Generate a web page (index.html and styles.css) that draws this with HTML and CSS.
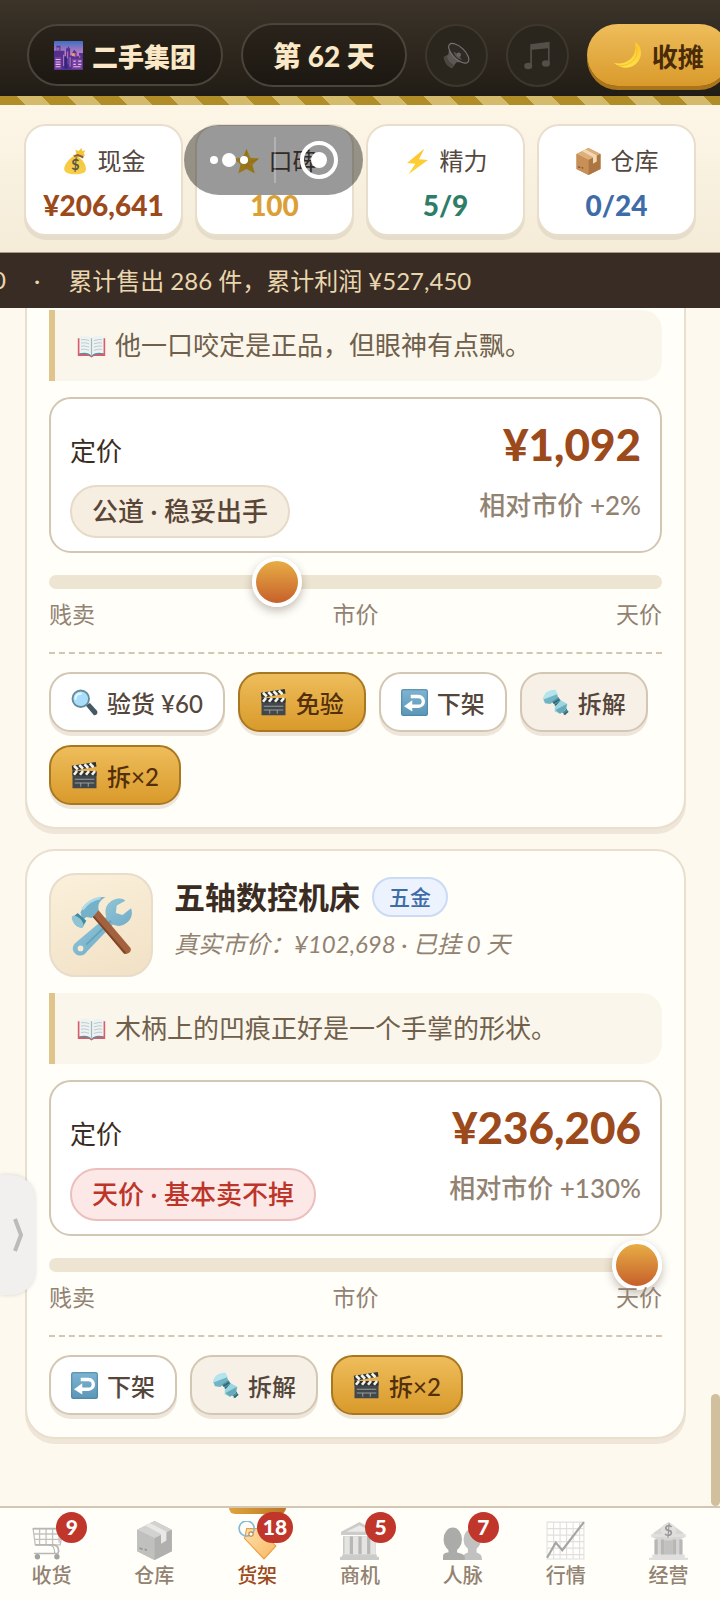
FILE: index.html
```html
<!DOCTYPE html>
<html lang="zh-CN">
<head>
    <meta charset="UTF-8">
    <meta name="viewport" content="width=device-width, initial-scale=1.0">
    <title>二手集团</title>
    <link rel="stylesheet" href="styles.css">
</head>
<body>
    <svg class="sprite" width="0" height="0" aria-hidden="true">
        <defs>
            <linearGradient id="g-sky" x1="0" y1="0" x2="0" y2="1"><stop offset="0" stop-color="#3f6fc4"/><stop offset=".45" stop-color="#c77bc0"/><stop offset="1" stop-color="#6a3fa8"/></linearGradient>
            <linearGradient id="g-moon" x1="0" y1="0" x2="0" y2="1"><stop offset="0" stop-color="#fdc62e"/><stop offset="1" stop-color="#ffe04a"/></linearGradient>
            <linearGradient id="g-bag" x1="0" y1="0" x2="0" y2="1"><stop offset="0" stop-color="#f5c540"/><stop offset="1" stop-color="#f8cf48"/></linearGradient>
            <linearGradient id="g-bolt" x1="0" y1="0" x2="0" y2="1"><stop offset="0" stop-color="#fec02e"/><stop offset="1" stop-color="#fdd83a"/></linearGradient>
            <linearGradient id="g-key" x1="0" y1="0" x2="0" y2="1"><stop offset="0" stop-color="#7fb4d2"/><stop offset="1" stop-color="#5b96b8"/></linearGradient>
            <linearGradient id="g-steel" x1="0" y1="0" x2="1" y2="1"><stop offset="0" stop-color="#a5d3e2"/><stop offset="1" stop-color="#5f9fbd"/></linearGradient>
            <linearGradient id="g-tag" x1="0" y1="0" x2="1" y2="1"><stop offset="0" stop-color="#ffe0a8"/><stop offset="1" stop-color="#f7b866"/></linearGradient>
        </defs>
        <symbol id="i-city" viewBox="0 0 36 36">
            <rect width="36" height="36" rx="1" fill="url(#g-sky)"/>
            <path d="M0 12h3V6h5v6h5v7h2V9h2l1-3 1 3h1v9h3v-4l2-3 3 3v5h3v-4h5v21H0z" fill="#53328f"/>
            <path d="M1 20h8v15H1zM22 22h13v13H22z" fill="#70419f"/>
            <path d="M2 23h6M2 26h6M2 29h6M2 32h6M24 25h3M30 25h4M24 29h3M30 29h4M24 32h9" stroke="#f2b8e0" stroke-width="1.4"/>
            <path d="M4 8v4M6 8v4M12 17v14M17 13v16M20 20v12M26 15v5M32 18v3" stroke="#d98fd2" stroke-width="1"/>
            <path d="M13 19l4 3v12h-4z" fill="#35267c"/><circle cx="24" cy="17" r="2" fill="#f19a68"/>
        </symbol>
        <symbol id="i-speaker" viewBox="0 0 36 36">
            <path d="M9 4L7 17l-6 3c1 7 5 13 11 15l6-8 15 0z" fill="#5d5853"/>
            <path d="M1 20c1 7 5 13 11 15l2-5C9 28 6 24 5 18z" fill="#4b4640"/>
            <ellipse cx="21" cy="15" rx="17" ry="8" transform="rotate(44 21 15)" fill="#2f2a25" stroke="#7a746e" stroke-width="1.500"/>
            <path d="M14 13c4 1 9 6 11 11-5-1-10-5-11-11z" fill="#57514b"/>
            <circle cx="21" cy="17" r="3" fill="#68625c"/>
        </symbol>
        <symbol id="i-music" viewBox="0 0 36 36">
            <path d="M9 4l24-3v26h-2V9L11 11v20H9z" fill="#544f49"/>
            <ellipse cx="6.500" cy="31" rx="5" ry="4" fill="#544f49"/><ellipse cx="28.500" cy="28" rx="5" ry="4" fill="#544f49"/>
        </symbol>
        <symbol id="i-moon" viewBox="0 0 36 36">
            <path d="M27 1c7 4 10 13 6 21-5 11-19 16-32 5 13 4 31-5 26-26z" fill="url(#g-moon)"/>
            <path d="M29 7c5 14-9 26-24 23" fill="none" stroke="#f6b61d" stroke-width="1"/>
        </symbol>
        <symbol id="i-star" viewBox="0 0 36 36">
            <path d="M18 1l5 12 12 1-9 8 3 12-11-6-11 6 3-12-9-8 12-1z" fill="#fdc92c"/>
            <path d="M18 3v24M33 15l-15 5M28 32l-10-12" stroke="#eab016" stroke-width="1"/>
        </symbol>
        <symbol id="i-bolt" viewBox="0 0 36 36">
            <path d="M27 1L4 20l11 1-9 14 26-19-12-1z" fill="url(#g-bolt)"/>
        </symbol>
        <symbol id="i-box" viewBox="0 0 36 36">
            <path d="M18 0l16 8v20L18 36 2 28V8z" fill="#bd8650"/>
            <path d="M18 0l16 8-16 8L2 8z" fill="#dfaf7b"/>
            <path d="M18 16l16-8v20L18 36z" fill="#ad7541"/>
            <path d="M2 8l16 8v20L2 28z" fill="#c88f57"/>
            <path d="M9 4l5-2 15 8v8l-5 3v-9z" fill="#f2d8b5"/>
            <path d="M4 25l3 1M9 26l2 1" stroke="#6f4b2c" stroke-width="1.500"/>
        </symbol>
        <symbol id="i-book" viewBox="0 0 36 36">
            <path d="M1 9h34v22H21l-3 2-3-2H1z" fill="#d85c6a"/>
            <path d="M3 7c7-2 12-1 15 2 3-3 8-4 15-2v21c-7-1-12 0-15 3-3-3-8-4-15-3z" fill="#edf2f2"/>
            <path d="M3 28c6-2 12-1 15 3 3-4 9-5 15-3v1c-7-1-12 0-15 3-3-3-8-4-15-3z" fill="#4f96a2"/>
            <path d="M18 9v22" stroke="#a3b7bc" stroke-width="1.500"/>
            <path d="M5 11c4-1 7 0 10 1M5 15c4-1 7 0 10 1M5 19c4-1 7 0 10 1M5 23c4-1 7 0 10 1M21 12c4-1 7-2 10-1M21 16c4-1 7-2 10-1M21 20c4-1 7-2 10-1M21 24c4-1 7-2 10-1" stroke="#aebfc3" stroke-width="1" fill="none"/>
        </symbol>
        <symbol id="i-search" viewBox="0 0 36 36">
            <path d="M21 22l4-2 9 10c1 3-1 4-3 4z" fill="#455a64" stroke="#455a64" stroke-width="2"/>
            <circle cx="13" cy="13" r="11" fill="#a9defa" stroke="#668b9b" stroke-width="2.500"/>
            <path d="M6 13c0-4 3-7 7-7" stroke="#e5f7ff" stroke-width="3" fill="none" stroke-linecap="round"/>
        </symbol>
        <symbol id="i-clap" viewBox="0 0 36 36">
            <path d="M2 13h32v22H2z" fill="#42474b"/>
            <path d="M1 5L33 0l1 6L2 12z" fill="#303335"/>
            <path d="M4 5l5 5M11 4l5 5M18 3l5 5M25 2l5 5" stroke="#f5f5ee" stroke-width="3.500"/>
            <path d="M2 12h32v6H2z" fill="#303335"/>
            <path d="M4 17l4-5M12 17l4-5M20 17l4-5M28 17l4-5" stroke="#f5f5ee" stroke-width="3.500"/>
            <path d="M5 23h26M5 28h26M13 28v5M23 28v5" stroke="#a1a6a8" stroke-width="1.200"/>
        </symbol>
        <symbol id="i-back" viewBox="0 0 36 36">
            <rect width="36" height="36" rx="3" fill="url(#g-key)"/>
            <rect x="1" y="1" width="34" height="34" rx="2" fill="none" stroke="#487f9d"/>
            <path d="M13 10h10c9 0 9 13 0 13h-9" fill="none" stroke="#fff" stroke-width="4.500"/>
            <path d="M15 15v15L4 23z" fill="#fff"/>
        </symbol>
        <symbol id="i-screw" viewBox="0 0 36 36">
            <path d="M1 14C2 5 10 0 18 1l3 6-10 12z" fill="#b5e5ec"/>
            <path d="M2 14l18-7 2 5-11 8-7-1z" fill="#71b4c4"/>
            <path d="M13 17l9-6 13 19-4 5z" fill="#518f9e"/>
            <path d="M15 19l8-5M17 22l8-5M26 31l7-4M29 34l6-4" stroke="#285e6e" stroke-width="1.500"/>
            <path d="M17 24l8-9 9 5-2 8-8 5-7-3z" fill="#9bd5df"/>
            <path d="M18 28l15-8-1 7-8 6z" fill="#68a9b9"/>
        </symbol>
        <symbol id="i-tools" viewBox="0 0 64 64">
            <path d="M37 23c-3-9 2-17 11-19 4-1 7 0 9 2l-9 5-1 8 7 2 9-7c3 8-2 16-10 18-3 1-6 0-9-1L17 59c-3 5-9 6-13 2s-2-9 2-12z" fill="url(#g-steel)"/>
            <circle cx="10" cy="56" r="3" fill="#f8ead0"/>
            <path d="M42 27L16 52" stroke="#4b90aa" stroke-width="2" opacity=".5"/>
            <path d="M22 21l6-6 34 40c3 4-3 9-7 6z" fill="#a3623d"/>
            <path d="M23 22l34 39" stroke="#804426" stroke-width="2"/>
            <path d="M10 18C15 8 23 2 36 2c-6 4-8 7-7 14l-7 8-6-1-4 4z" fill="#75b2ca"/>
            <path d="M12 15C17 8 24 4 31 3" stroke="#afdae6" stroke-width="3" fill="none"/>
            <path d="M2 23l5-4 9 8-4 7C6 34 1 29 2 23z" fill="#408ba2"/>
            <ellipse cx="7" cy="28" rx="4" ry="8" transform="rotate(-43 7 28)" fill="#8fc4d5"/>
        </symbol>
        <symbol id="i-cart" viewBox="0 0 36 36">
            <path d="M1 7h28l-3 15H3zM2 12h26M2 17h25M7 7v15M13 7v15M19 7v15M25 7v13" fill="none" stroke="#999" stroke-width="1.200"/>
            <path d="M1 7h32M3 22h16c6 0 6 5 5 8H2" stroke="#888" stroke-width="1.600" fill="none"/>
            <path d="M15 22c6 0 6 5 6 8" stroke="#888" stroke-width="1.200" fill="none"/>
            <circle cx="5" cy="33" r="2.500" fill="#666"/><circle cx="23" cy="33" r="2.500" fill="#666"/>
        </symbol>
        <symbol id="i-tag" viewBox="0 0 36 36">
            <path d="M8 7h10l17 16-11 12L6 16z" fill="url(#g-tag)" stroke="#ed9d3d"/>
            <circle cx="8" cy="7" r="7" fill="none" stroke="#82bad7" stroke-width="1.500"/>
            <circle cx="12" cy="12" r="2" fill="#fffef9" stroke="#ba8750"/>
        </symbol>
        <symbol id="i-hall" viewBox="0 0 36 36">
            <path d="M18 1l17 9v3H1v-3z" fill="#aaa"/><path d="M18 4l12 6H6z" fill="#ddd"/>
            <path d="M3 14h30v17H3z" fill="#888"/>
            <path d="M4 14h5v18H4zM12 14h5v18h-5zM20 14h5v18h-5zM28 14h5v18h-5z" fill="#d3d3d3"/>
            <path d="M2 31h32v2H2zM0 33h36v3H0z" fill="#aaa"/>
        </symbol>
        <symbol id="i-people" viewBox="0 0 36 36">
            <g fill="#999"><ellipse cx="27" cy="17" rx="8" ry="10"/><path d="M23 24h8v5c3 1 5 2 5 7H18c0-5 2-6 5-7z"/></g>
            <g fill="#757575"><ellipse cx="9" cy="17" rx="8.500" ry="11"/><path d="M5 25h8v4c5 1 8 2 7 7H0v-3c0-3 2-4 5-4z"/></g>
        </symbol>
        <symbol id="i-chart" viewBox="0 0 36 36">
            <path d="M1 1h34v34H1zM1 7h34M1 13h34M1 19h34M1 25h34M1 31h34M7 1v34M13 1v34M19 1v34M25 1v34M31 1v34" fill="#fff" stroke="#ccc" stroke-width="1"/>
            <path d="M1 34l8-14 6 7L35 1" fill="none" stroke="#6b6b6b" stroke-width="2"/>
        </symbol>
    </svg>

    <div class="app">
        <header class="topbar">
            <div class="pill brand"><svg class="icon icon-lg"><use href="#i-city"/></svg>二手集团</div>
            <div class="pill day">第 62 天</div>
            <button class="round-btn" type="button" aria-label="音效"><svg class="icon"><use href="#i-speaker"/></svg></button>
            <button class="round-btn" type="button" aria-label="音乐"><svg class="icon icon-lg"><use href="#i-music"/></svg></button>
            <button class="close-btn" type="button"><svg class="icon icon-lg"><use href="#i-moon"/></svg>收摊</button>
        </header>
        <div class="stripe"></div>

        <section class="stats">
            <div class="stat cash">
                <span class="stat-label">
                    <svg class="icon" viewBox="0 0 36 36">
                        <path d="M18 10c-3-2-4-1-3 1-6 4-13 12-12 18 1 4 6 6 14 6s15-1 15-7-5-13-10-16l3-2z" fill="url(#g-bag)"/>
                        <path d="M18 2l4 2 4-4 1 4 4-1-2 4 2 3-10 2-6-2 4-2z" fill="#f6c33b"/>
                        <path d="M16 10l5-2 8 3-1 3-6-3-6 1z" fill="#86603a"/>
                        <text class="coin" x="18" y="29" font-size="19">$</text>
                    </svg>现金</span>
                <strong>¥206,641</strong>
            </div>
            <div class="stat fame">
                <span class="stat-label"><svg class="icon"><use href="#i-star"/></svg>口碑</span>
                <strong>100</strong>
            </div>
            <div class="stat energy">
                <span class="stat-label"><svg class="icon"><use href="#i-bolt"/></svg>精力</span>
                <strong>5/9</strong>
            </div>
            <div class="stat store">
                <span class="stat-label"><svg class="icon"><use href="#i-box"/></svg>仓库</span>
                <strong>0/24</strong>
            </div>
        </section>

        <div class="ticker"><span>0</span><span>·</span><span>累计售出 286 件，累计利润 ¥527,450</span></div>

        <main class="shelf">
            <article class="card card-scrolled">
                <p class="note"><svg class="icon icon-lg"><use href="#i-book"/></svg>他一口咬定是正品，但眼神有点飘。</p>
                <div class="price-box">
                    <div class="price-left">
                        <label for="price-1">定价</label>
                        <span class="verdict">公道 · 稳妥出手</span>
                    </div>
                    <div class="price-right">
                        <strong>¥1,092</strong>
                        <span>相对市价 +2%</span>
                    </div>
                </div>
                <input class="slider" type="range" id="price-1" min="0" max="100" value="36">
                <div class="scale"><span>贱卖</span><span>市价</span><span>天价</span></div>
                <div class="actions">
                    <button class="btn" type="button"><svg class="icon"><use href="#i-search"/></svg>验货 ¥60</button>
                    <button class="btn gold" type="button"><svg class="icon"><use href="#i-clap"/></svg>免验</button>
                    <button class="btn" type="button"><svg class="icon"><use href="#i-back"/></svg>下架</button>
                    <button class="btn muted" type="button"><svg class="icon"><use href="#i-screw"/></svg>拆解</button>
                    <button class="btn gold" type="button"><svg class="icon"><use href="#i-clap"/></svg>拆×2</button>
                </div>
            </article>

            <article class="card">
                <div class="item-head">
                    <div class="thumb"><svg><use href="#i-tools"/></svg></div>
                    <div class="item-info">
                        <div class="item-title"><h2>五轴数控机床</h2><span class="kind">五金</span></div>
                        <p>真实市价：¥102,698 · 已挂 0 天</p>
                    </div>
                </div>
                <p class="note"><svg class="icon icon-lg"><use href="#i-book"/></svg>木柄上的凹痕正好是一个手掌的形状。</p>
                <div class="price-box">
                    <div class="price-left">
                        <label for="price-2">定价</label>
                        <span class="verdict bad">天价 · 基本卖不掉</span>
                    </div>
                    <div class="price-right">
                        <strong>¥236,206</strong>
                        <span>相对市价 +130%</span>
                    </div>
                </div>
                <input class="slider" type="range" id="price-2" min="0" max="100" value="100">
                <div class="scale"><span>贱卖</span><span>市价</span><span>天价</span></div>
                <div class="actions">
                    <button class="btn" type="button"><svg class="icon"><use href="#i-back"/></svg>下架</button>
                    <button class="btn muted" type="button"><svg class="icon"><use href="#i-screw"/></svg>拆解</button>
                    <button class="btn gold" type="button"><svg class="icon"><use href="#i-clap"/></svg>拆×2</button>
                </div>
            </article>

            <button class="drawer" type="button" aria-label="展开"><svg viewBox="0 0 12 36"><path d="M3 2l6 16-6 16"/></svg></button>
            <div class="scroll-thumb"></div>
        </main>

        <nav class="tabs">
            <a href="#buy"><span class="tab-icon"><svg><use href="#i-cart"/></svg></span>收货<b class="badge">9</b></a>
            <a href="#store"><span class="tab-icon"><svg><use href="#i-box"/></svg></span>仓库</a>
            <a href="#shelf" class="active"><span class="tab-icon"><svg><use href="#i-tag"/></svg></span>货架<b class="badge">18</b></a>
            <a href="#chance"><span class="tab-icon"><svg><use href="#i-hall"/></svg></span>商机<b class="badge">5</b></a>
            <a href="#people"><span class="tab-icon"><svg><use href="#i-people"/></svg></span>人脉<b class="badge">7</b></a>
            <a href="#market"><span class="tab-icon"><svg><use href="#i-chart"/></svg></span>行情</a>
            <a href="#manage"><span class="tab-icon">
                <svg viewBox="0 0 36 36">
                    <path d="M18 1l14 10v5H4v-5z" fill="#bbb"/>
                    <path d="M2 12h32v3H2zM3 31h30v3H3zM0 34h36v2H0z" fill="#ccc"/>
                    <path d="M6 15h24v16H6z" fill="#bbb"/>
                    <path d="M5 17h3v14H5zM11 17h3v14h-3zM22 17h3v14h-3zM28 17h3v14h-3z" fill="#888"/>
                    <path d="M14 18h8v13h-8z" fill="#999"/>
                    <circle cx="18" cy="9" r="7" fill="#ccc"/>
                    <text class="coin" x="18" y="14" font-size="14">$</text>
                </svg></span>经营</a>
        </nav>

        <!-- 小程序胶囊按钮 -->
        <div class="capsule">
            <button type="button" aria-label="更多"><svg class="dots" viewBox="0 0 40 16"><circle cx="5" cy="8" r="4"/><circle cx="20" cy="8" r="7"/><circle cx="35" cy="8" r="4"/></svg></button>
            <button type="button" aria-label="关闭"><svg class="target" viewBox="0 0 40 40"><circle cx="20" cy="20" r="17"/><circle class="dot" cx="20" cy="20" r="8"/></svg></button>
        </div>
    </div>
</body>
</html>
```
FILE: styles.css
```css
* {
    box-sizing: border-box;
}
body {
    margin: 0;
    font-family: Lato, "Noto Sans CJK SC", sans-serif;
    font-size: 24px;
    color: #3a2c22;
    background: #fef9ee;
}
button {
    font-family: inherit;
    cursor: pointer;
}
h2, p {
    margin: 0;
}
.sprite {
    position: absolute;
}
.app {
    position: relative;
    display: flex;
    flex-direction: column;
    min-height: 100vh;
    overflow: hidden;
}
.icon {
    width: 27px;
    height: 27px;
    flex: none;
}
.icon-lg {
    width: 29px;
    height: 29px;
}
.coin {
    fill: #5c5646;
    font-weight: bold;
    text-anchor: middle;
}

/* 顶栏 */
.topbar {
    display: flex;
    align-items: center;
    gap: 18px;
    height: 96px;
    padding: 14px 0 0 27px;
    background: linear-gradient(#3c3429, #211c15);
    white-space: nowrap;
}
.topbar > * {
    flex: none;
}
.pill {
    display: flex;
    align-items: center;
    gap: 9px;
    height: 62px;
    padding: 0 25px;
    border: 2px solid #4a443a;
    border-radius: 32px;
    background: linear-gradient(#2a231b, #1c1811);
    color: #fbe8c6;
    font-size: 26px;
    font-weight: 900;
}
.day {
    height: 64px;
    padding: 0 30px;
    font-size: 28px;
}
.round-btn {
    display: flex;
    align-items: center;
    justify-content: center;
    width: 63px;
    height: 63px;
    padding: 0;
    border: 2px solid #3d372e;
    border-radius: 50%;
    background: #2a251d;
}
.close-btn {
    display: flex;
    align-items: center;
    gap: 10px;
    height: 62px;
    padding: 0 26px;
    border: 0;
    border-radius: 32px;
    background: linear-gradient(#eebd5b, #d99a2b);
    box-shadow: 0 4px 0 #a9741a;
    color: #4a2b08;
    font-size: 26px;
    font-weight: bold;
}
.stripe {
    height: 9px;
    background: repeating-linear-gradient(45deg, #b08d26 0 18px, #d4bb6c 18px 36px);
}

/* 数值 */
.stats {
    display: grid;
    grid-template-columns: repeat(4, 1fr);
    gap: 12px;
    padding: 19px 24px 16px;
    border-bottom: 1px solid #a99b82;
    background: linear-gradient(#fdf6e7, #f4ebd8);
}
.stat {
    display: flex;
    flex-direction: column;
    align-items: center;
    gap: 8px;
    height: 112px;
    padding-top: 17px;
    border: 2px solid #e8decb;
    border-radius: 22px;
    background: #fff;
    box-shadow: 0 4px 0 #e6dcca;
    line-height: 36px;
}
.stat-label {
    display: flex;
    align-items: center;
    gap: 9px;
    color: #54483f;
}
.stat strong {
    font-size: 28px;
    font-weight: 900;
}
.cash strong {
    color: #9c4a1c;
}
.fame strong {
    color: #dba035;
}
.energy strong {
    color: #2e7d68;
}
.store strong {
    color: #3e6ca8;
}

.ticker {
    display: flex;
    align-items: center;
    gap: 28px;
    height: 55px;
    margin-left: -8px;
    padding-bottom: 2px;
    background: #382c25;
    color: #ead6ad;
    white-space: nowrap;
}

/* 货架 */
.shelf {
    position: relative;
    flex: 1;
    display: flex;
    flex-direction: column;
    gap: 20px;
    padding: 0 34px 67px 25px;
    background: #fef9ee;
}
.card {
    padding: 22px;
    border: 2px solid #e8dfce;
    border-radius: 30px;
    background: #fffef9;
    box-shadow: 0 5px 0 #efe6d9;
}
.card-scrolled {
    padding-top: 2px;
    border-top: 0;
    border-radius: 0 0 30px 30px;
}
.item-head {
    display: flex;
    gap: 21px;
    margin-bottom: 16px;
}
.thumb {
    display: flex;
    align-items: center;
    justify-content: center;
    width: 104px;
    height: 104px;
    border: 2px solid #e8dccb;
    border-radius: 26px;
    background: linear-gradient(160deg, #fbf0db, #f1e1c5);
}
.thumb svg {
    width: 61px;
    height: 61px;
}
.item-title {
    display: flex;
    align-items: center;
    gap: 12px;
    height: 48px;
}
.item-title h2 {
    padding-bottom: 3px;
    font-size: 31px;
}
.kind {
    height: 40px;
    padding: 0 15px;
    border: 2px solid #c9dbf5;
    border-radius: 20px;
    background: #edf3fe;
    color: #3e6ca8;
    font-size: 21px;
    font-weight: 500;
    line-height: 35px;
}
.item-info p {
    color: #928272;
    font-style: italic;
    line-height: 46px;
}
.note {
    display: flex;
    align-items: center;
    gap: 9px;
    min-height: 71px;
    padding: 16px 22px;
    border-left: 6px solid #dfc58b;
    border-radius: 0 20px 20px 0;
    background: #faf6eb;
    color: #705f4b;
    font-size: 26px;
    line-height: 39px;
}
.price-box {
    display: flex;
    justify-content: space-between;
    margin-top: 16px;
    padding: 17px 19px 13px;
    border: 2px solid #d3c6b3;
    border-radius: 22px;
    background: #fff;
    font-size: 26px;
}
.price-left {
    display: flex;
    flex-direction: column;
    align-items: flex-start;
    gap: 15px;
    padding-top: 16px;
}
.price-left label {
    line-height: 38px;
}
.verdict {
    height: 53px;
    padding: 0 20px;
    border: 2px solid #e6dac8;
    border-radius: 27px;
    background: #f6eee1;
    color: #5a4636;
    font-weight: 500;
    line-height: 49px;
}
.verdict.bad {
    border-color: #ebbfbd;
    background: #fce8e7;
    color: #bd3529;
}
.price-right {
    display: flex;
    flex-direction: column;
    gap: 16px;
    color: #928272;
    font-weight: 500;
    text-align: right;
    line-height: 34px;
}
.price-right strong {
    color: #9c4a1c;
    font-size: 44px;
    font-weight: 900;
    line-height: 56px;
}
.slider {
    display: block;
    width: 100%;
    height: 14px;
    margin: 22px 0 0;
    border-radius: 7px;
    background: #ede4d2;
    appearance: none;
}
.slider::-webkit-slider-thumb {
    appearance: none;
    width: 50px;
    height: 50px;
    border: 4px solid #fff;
    border-radius: 50%;
    background: linear-gradient(#e8ad45, #c6602b);
    box-shadow: 0 4px 10px rgba(60, 40, 20, 0.3);
}
.scale {
    display: flex;
    justify-content: space-between;
    margin-top: 10px;
    color: #928272;
    font-size: 23px;
    line-height: 30px;
}
.actions {
    display: flex;
    flex-wrap: wrap;
    gap: 13px;
    margin-top: 23px;
    padding-top: 18px;
    border-top: 2px dashed #d3c6b3;
}
.btn {
    display: flex;
    align-items: center;
    gap: 9px;
    height: 60px;
    padding: 0 20px;
    border: 2px solid #d3c6b3;
    border-radius: 22px;
    background: #fff;
    box-shadow: 0 4px 0 #eee6da;
    color: #54463a;
    font-size: 24px;
    font-weight: 500;
}
.btn.gold {
    border-color: #a87820;
    background: linear-gradient(#eebd5b, #d99a2b);
    color: #54300a;
}
.btn.muted {
    background: #f6f0e7;
}

.drawer {
    position: absolute;
    top: 867px;
    left: 0;
    display: flex;
    align-items: center;
    justify-content: flex-end;
    width: 35px;
    height: 120px;
    padding: 0 11px 0 0;
    border: 0;
    border-radius: 0 24px 24px 0;
    background: #f1f0ef;
    box-shadow: 0 0 4px rgba(0, 0, 0, 0.15);
}
.drawer svg {
    width: 12px;
    height: 36px;
    fill: none;
    stroke: #bbb;
    stroke-width: 4px;
}
.scroll-thumb {
    position: absolute;
    right: 0;
    bottom: 0;
    width: 9px;
    height: 112px;
    border-radius: 5px;
    background: #d1c09d;
}

/* 底部导航 */
.tabs {
    display: grid;
    grid-template-columns: repeat(7, 1fr);
    height: 94px;
    border-top: 2px solid #d3c6b3;
    background: #fffef9;
}
.tabs a {
    position: relative;
    display: flex;
    flex-direction: column;
    align-items: center;
    gap: 2px;
    padding-top: 12px;
    color: #928272;
    font-size: 20px;
    font-weight: 500;
    line-height: 26px;
    text-decoration: none;
}
.tab-icon {
    display: flex;
    align-items: center;
    height: 40px;
    filter: grayscale(1);
    opacity: 0.6;
}
.tab-icon svg {
    width: 39px;
    height: 39px;
}
.tabs .active {
    color: #9c4a1c;
}
.active .tab-icon {
    filter: none;
    opacity: 1;
}
.active::before {
    content: "";
    position: absolute;
    top: 0;
    width: 57px;
    height: 6px;
    border-radius: 0 0 6px 6px;
    background: linear-gradient(90deg, #dfa33c, #bd7726);
}
.badge {
    position: absolute;
    top: 4px;
    right: calc(50% - 36px);
    min-width: 31px;
    height: 31px;
    padding: 0 6px;
    border-radius: 16px;
    background: #c1362b;
    color: #fff;
    font-size: 21px;
    font-weight: 900;
    line-height: 30px;
    text-align: center;
}

.capsule {
    position: absolute;
    top: 125px;
    left: 184px;
    display: grid;
    grid-template-columns: 1fr 1fr;
    align-items: center;
    width: 179px;
    height: 70px;
    border-radius: 35px;
    background: rgba(0, 0, 0, 0.4);
}
.capsule button {
    display: flex;
    align-items: center;
    justify-content: center;
    height: 46px;
    padding: 0;
    border: 0;
    background: none;
}
.capsule button + button {
    border-left: 2px solid rgba(255, 255, 255, 0.25);
}
.capsule svg {
    fill: #fff;
}
.dots {
    width: 40px;
    height: 16px;
}
.target {
    width: 40px;
    height: 40px;
}
.target circle {
    fill: none;
    stroke: #fff;
    stroke-width: 4px;
}
.target .dot {
    fill: #fff;
    stroke: none;
}
```
